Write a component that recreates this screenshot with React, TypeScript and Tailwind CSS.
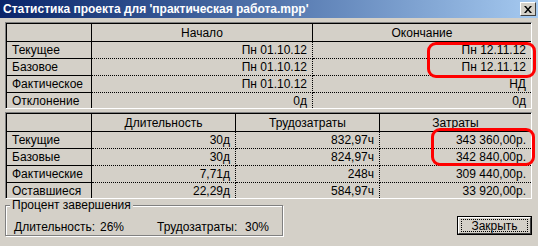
import React from "react";

type Row = { label: string; cells: string[] };

function StatTable({
  cols,
  headers,
  rows,
}: {
  cols: string;
  headers: string[];
  rows: Row[];
}) {
  const n = headers.length;
  return (
    <div className="ml-[5px] w-[527px] border border-t-[#808080] border-l-[#808080] border-r-white border-b-white">
      <div className={`grid border-t border-l border-black ${cols}`}>
        <div className="h-[18px] border-b border-r border-black" />
        {headers.map((h, i) => (
          <div
            key={h}
            className={`flex h-[18px] items-center justify-center border-b border-black ${
              i < n - 1 ? "border-r" : ""
            }`}
          >
            {h}
          </div>
        ))}
        {rows.map((r, ri) => {
          const last = ri === rows.length - 1;
          return (
            <React.Fragment key={r.label}>
              <div
                className={`flex items-center border-r border-black pl-[5px] ${
                  last ? "h-[15px]" : "h-[17px] border-b"
                }`}
              >
                {r.label}
              </div>
              {r.cells.map((c, ci) => (
                <div
                  key={ci}
                  className={`flex items-center justify-end pr-[5px] border-dotted border-black ${
                    last ? "h-[15px]" : "h-[17px] border-b"
                  } ${ci < n - 1 ? "border-r" : ""}`}
                >
                  {c}
                </div>
              ))}
            </React.Fragment>
          );
        })}
      </div>
    </div>
  );
}

export default function App() {
  return (
    <div className="relative h-[246px] w-[538px] overflow-hidden bg-[#D4D0C8] font-['Liberation_Sans',Arial,sans-serif] text-[12px] leading-none text-black">
      {/* Title bar */}
      <div className="flex h-[18px] items-center justify-between bg-gradient-to-r from-[#0A246A] to-[#A6CAF0] pl-[3px] pr-[2px]">
        <span className="text-[12px] font-bold text-white">
          Статистика проекта для 'практическая работа.mpp'
        </span>
        <div className="flex h-[14px] w-[16px] items-center justify-center border border-t-white border-l-white border-r-[#404040] border-b-[#404040] bg-[#D4D0C8]">
          <svg width="8" height="7" viewBox="0 0 8 7">
            <path d="M0 0h2l2 2.5L6 0h2L5 3.5 8 7H6L4 4.5 2 7H0l3-3.5z" fill="#000" />
          </svg>
        </div>
      </div>

      <div className="mt-[4px]">
        <StatTable
          cols="grid-cols-[85px_221px_1fr]"
          headers={["Начало", "Окончание"]}
          rows={[
            { label: "Текущее", cells: ["Пн 01.10.12", "Пн 12.11.12"] },
            { label: "Базовое", cells: ["Пн 01.10.12", "Пн 12.11.12"] },
            { label: "Фактическое", cells: ["Пн 01.10.12", "НД"] },
            { label: "Отклонение", cells: ["0д", "0д"] },
          ]}
        />
      </div>

      <div className="mt-[3px]">
        <StatTable
          cols="grid-cols-[85px_144px_144px_1fr]"
          headers={["Длительность", "Трудозатраты", "Затраты"]}
          rows={[
            { label: "Текущие", cells: ["30д", "832,97ч", "343 360,00р."] },
            { label: "Базовые", cells: ["30д", "824,97ч", "342 840,00р."] },
            { label: "Фактические", cells: ["7,71д", "248ч", "309 440,00р."] },
            { label: "Оставшиеся", cells: ["22,29д", "584,97ч", "33 920,00р."] },
          ]}
        />
      </div>

      {/* Bottom area */}
      <div className="mt-[6px] flex items-end">
        <div className="relative ml-[5px] h-[31px] w-[278px] border border-[#808080] shadow-[inset_1px_1px_0_#fff,1px_1px_0_#fff]">
          <span className="absolute left-[4px] top-[-7px] bg-[#D4D0C8] px-[2px]">
            Процент завершения
          </span>
          <div className="flex h-full items-center pt-[13px] pl-[8px]">
            <span className="w-[86px]">Длительность:</span>
            <span className="w-[57px]">26%</span>
            <span className="w-[88px]">Трудозатраты:</span>
            <span>30%</span>
          </div>
        </div>
        <div className="ml-auto mr-[6px] mb-[1px] flex h-[19px] w-[75px] items-center justify-center border border-black bg-[#D4D0C8]">
          <div className="flex h-full w-full items-center justify-center border border-t-white border-l-white border-r-[#404040] border-b-[#404040]">
            <div className="flex h-[13px] w-[67px] items-center justify-center border border-dotted border-black">
              Закрыть
            </div>
          </div>
        </div>
      </div>

      {/* Red annotation outlines */}
      <div className="pointer-events-none absolute left-[427px] top-[42px] h-[36px] w-[109px] rounded-[9px] border-[3px] border-[#FF0000]" />
      <div className="pointer-events-none absolute left-[431px] top-[128px] h-[38px] w-[104px] rounded-[9px] border-[3px] border-[#FF0000]" />
    </div>
  );
}
